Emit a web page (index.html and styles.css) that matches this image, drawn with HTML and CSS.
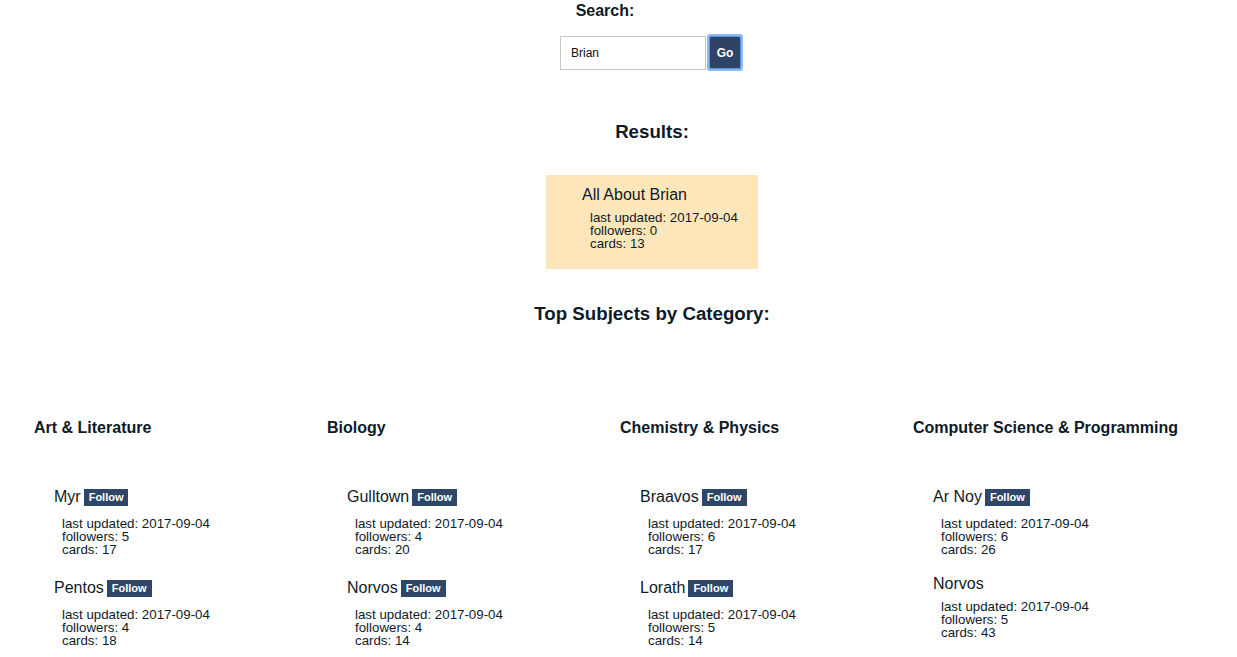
FILE: index.html
```html
<!DOCTYPE html>
<html>
<head>
<meta charset="utf-8">
<link rel="stylesheet" href="styles.css">
</head>
<body>
<div class="main">
  <div class="search-label">Search:</div>
  <form class="search-form">
    <input class="search-input" type="text" value="Brian">
    <button class="go-btn" type="button">Go</button>
  </form>
  <h3 class="section-title results-title">Results:</h3>
  <div class="result-card">
    <div class="result-name">All About Brian</div>
    <div class="details">
      <div>last updated: 2017-09-04</div>
      <div>followers: 0</div>
      <div>cards: 13</div>
    </div>
  </div>
  <h3 class="section-title top-title">Top Subjects by Category:</h3>
</div>
<div class="categories">
  <div class="category">
    <h4 class="cat-title">Art &amp; Literature</h4>
    <div class="item">
      <div class="name-row has-btn"><span class="name">Myr</span><button class="follow">Follow</button></div>
      <div class="details"><div>last updated: 2017-09-04</div><div>followers: 5</div><div>cards: 17</div></div>
    </div>
    <div class="item">
      <div class="name-row has-btn"><span class="name">Pentos</span><button class="follow">Follow</button></div>
      <div class="details"><div>last updated: 2017-09-04</div><div>followers: 4</div><div>cards: 18</div></div>
    </div>
  </div>
  <div class="category">
    <h4 class="cat-title">Biology</h4>
    <div class="item">
      <div class="name-row has-btn"><span class="name">Gulltown</span><button class="follow">Follow</button></div>
      <div class="details"><div>last updated: 2017-09-04</div><div>followers: 4</div><div>cards: 20</div></div>
    </div>
    <div class="item">
      <div class="name-row has-btn"><span class="name">Norvos</span><button class="follow">Follow</button></div>
      <div class="details"><div>last updated: 2017-09-04</div><div>followers: 4</div><div>cards: 14</div></div>
    </div>
  </div>
  <div class="category">
    <h4 class="cat-title">Chemistry &amp; Physics</h4>
    <div class="item">
      <div class="name-row has-btn"><span class="name">Braavos</span><button class="follow">Follow</button></div>
      <div class="details"><div>last updated: 2017-09-04</div><div>followers: 6</div><div>cards: 17</div></div>
    </div>
    <div class="item">
      <div class="name-row has-btn"><span class="name">Lorath</span><button class="follow">Follow</button></div>
      <div class="details"><div>last updated: 2017-09-04</div><div>followers: 5</div><div>cards: 14</div></div>
    </div>
  </div>
  <div class="category">
    <h4 class="cat-title">Computer Science &amp; Programming</h4>
    <div class="item">
      <div class="name-row has-btn"><span class="name">Ar Noy</span><button class="follow">Follow</button></div>
      <div class="details"><div>last updated: 2017-09-04</div><div>followers: 6</div><div>cards: 26</div></div>
    </div>
    <div class="item">
      <div class="name-row"><span class="name">Norvos</span></div>
      <div class="details"><div>last updated: 2017-09-04</div><div>followers: 5</div><div>cards: 43</div></div>
    </div>
  </div>
</div>
</body>
</html>
```

FILE: styles.css
```css
html, body {
  margin: 0;
  padding: 0;
  background: #ffffff;
}
body {
  font-family: "Liberation Sans", Arial, sans-serif;
  color: #0e1a28;
}
.main {
  padding-left: 67px;
  display: flex;
  flex-direction: column;
  align-items: center;
}
.search-label {
  font-size: 16px;
  font-weight: bold;
  line-height: 18px;
  margin-top: 2px;
  margin-right: 94px;
}
.search-form {
  display: flex;
  align-items: flex-start;
  margin: 16px 0 0 -4px;
}
.search-input {
  box-sizing: border-box;
  width: 146px;
  height: 34px;
  border: 1px solid #c8c8c8;
  border-radius: 0;
  padding: 0 10px;
  margin: 0;
  font-family: "Liberation Sans", Arial, sans-serif;
  font-size: 12px;
  color: #111;
  outline: none;
}
.go-btn {
  box-sizing: border-box;
  width: 30px;
  height: 31px;
  margin: 1px 0 0 4px;
  padding: 0;
  border: none;
  background: #2d4466;
  color: #fff;
  font-family: "Liberation Sans", Arial, sans-serif;
  font-size: 12px;
  font-weight: bold;
  outline: none;
  border-radius: 1px;
  box-shadow: 0 0 0 1px #5d8fd8, 0 0 0 3px #8dbaf6;
}
.section-title {
  font-size: 18.7px;
  font-weight: bold;
  line-height: 22px;
  margin: 0;
}
.results-title {
  margin-top: 51px;
}
.result-card {
  box-sizing: border-box;
  width: 212px;
  height: 94px;
  margin-top: 32px;
  padding: 11px 0 0 36px;
  background: #fde6ba;
}
.result-name {
  font-size: 16px;
  line-height: 18px;
}
.details {
  font-size: 13.3px;
  line-height: 13px;
  padding-left: 8px;
  margin-top: 7px;
}
.top-title {
  margin-top: 34px;
}
.categories {
  display: grid;
  grid-template-columns: repeat(4, 293px);
  padding-left: 34px;
}
.cat-title {
  font-size: 16px;
  font-weight: bold;
  line-height: 18px;
  margin: 94px 0 47px 0;
}
.item {
  padding-left: 20px;
  margin-bottom: 19px;
}
.name-row {
  display: flex;
  align-items: center;
  min-height: 18px;
}
.name-row.has-btn {
  padding: 4px 0;
}
.name {
  font-size: 16px;
  line-height: 18px;
}
.follow {
  height: 17px;
  margin-left: 3px;
  padding: 0 5px;
  border: none;
  background: #2e4668;
  color: #fff;
  font-family: "Liberation Sans", Arial, sans-serif;
  font-size: 11px;
  font-weight: bold;
  line-height: 17px;
}
.item .details {
  margin-top: 7px;
}
```
